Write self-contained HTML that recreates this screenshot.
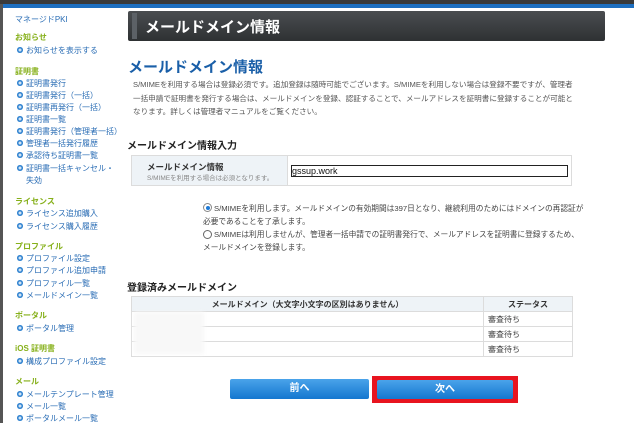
<!DOCTYPE html>
<html><head><meta charset="utf-8"><style>
*{margin:0;padding:0;box-sizing:border-box}
body{width:634px;height:423px;overflow:hidden;background:#fff;font-family:"Liberation Sans","Noto Sans CJK JP",sans-serif;position:relative}
.a{position:absolute;white-space:nowrap}
.topd{position:absolute;left:0;top:0;width:634px;height:4px;background:#3a3a3a}
.topb{position:absolute;left:0;top:4px;width:634px;height:4px;background:#1e6fc0}
.lb{position:absolute;left:0;top:4px;width:3px;height:419px;background:#555}
.sh{font-size:8px;font-weight:bold;color:#86b01a}
.si{font-size:8px;color:#2a6db5;left:26px}
.si:before{content:"";position:absolute;left:-9px;top:2px;width:6px;height:6px;border-radius:50%;background:#2f82d0;box-shadow:inset 0 0 0 1.5px #2f82d0,inset 0 0 0 3px #cfe3f5}
.title{position:absolute;left:128px;top:11px;width:477px;height:30px;background:linear-gradient(#4a4d50,#2e3133);border-radius:2px}
.title:before{content:"";position:absolute;left:4px;top:2px;width:5px;height:26px;background:#5c6166}
.p{font-size:7.6px;color:#555;left:133px}
.r{font-size:7.7px;color:#444}
td,th{border:1px solid #dcdcdc}
.btn{position:absolute;height:20px;background:linear-gradient(#4aa3ea,#1477cf);color:#fff;font-weight:bold;font-size:10px;text-align:center;line-height:20px;border-radius:2px}
</style></head><body>
<div class="topd"></div><div class="topb"></div><div class="lb"></div>
<div class="a" style="left:15px;top:14px;font-size:8px;color:#2a6db5">マネージドPKI</div>
<div class="a sh" style="left:15px;top:32px">お知らせ</div>
<div class="a si" style="top:45px">お知らせを表示する</div>
<div class="a sh" style="left:15px;top:66px">証明書</div>
<div class="a si" style="top:78px">証明書発行</div>
<div class="a si" style="top:90px">証明書発行（一括）</div>
<div class="a si" style="top:102px">証明書再発行（一括）</div>
<div class="a si" style="top:114px">証明書一覧</div>
<div class="a si" style="top:126px">証明書発行（管理者一括）</div>
<div class="a si" style="top:138px">管理者一括発行履歴</div>
<div class="a si" style="top:150px">承認待ち証明書一覧</div>
<div class="a si" style="top:163px">証明書一括キャンセル・</div>
<div class="a" style="left:26px;top:175px;font-size:8px;color:#2a6db5">失効</div>
<div class="a sh" style="left:15px;top:196px">ライセンス</div>
<div class="a si" style="top:208px">ライセンス追加購入</div>
<div class="a si" style="top:221px">ライセンス購入履歴</div>
<div class="a sh" style="left:15px;top:241px">プロファイル</div>
<div class="a si" style="top:253px">プロファイル設定</div>
<div class="a si" style="top:265px">プロファイル追加申請</div>
<div class="a si" style="top:278px">プロファイル一覧</div>
<div class="a si" style="top:290px">メールドメイン一覧</div>
<div class="a sh" style="left:15px;top:310px">ポータル</div>
<div class="a si" style="top:323px">ポータル管理</div>
<div class="a sh" style="left:15px;top:343px">iOS 証明書</div>
<div class="a si" style="top:356px">構成プロファイル設定</div>
<div class="a sh" style="left:15px;top:376px">メール</div>
<div class="a si" style="top:389px">メールテンプレート管理</div>
<div class="a si" style="top:401px">メール一覧</div>
<div class="a si" style="top:413px">ポータルメール一覧</div>

<div class="title"><div class="a" style="left:17px;top:5px;color:#fff;font-size:15px;font-weight:bold">メールドメイン情報</div></div>
<div class="a" style="left:128px;top:56px;font-size:15px;font-weight:bold;color:#1a5fa8">メールドメイン情報</div>
<div class="a p" style="top:79px">S/MIMEを利用する場合は登録必須です。追加登録は随時可能でございます。S/MIMEを利用しない場合は登録不要ですが、管理者</div>
<div class="a p" style="top:93px">一括申請で証明書を発行する場合は、メールドメインを登録、認証することで、メールアドレスを証明書に登録することが可能と</div>
<div class="a p" style="top:106px">なります。詳しくは管理者マニュアルをご覧ください。</div>
<div class="a" style="left:127px;top:137px;font-size:10px;font-weight:bold;color:#222">メールドメイン情報入力</div>
<div class="a" style="left:131px;top:155px;width:441px;height:31px;border:1px solid #dcdcdc">
 <div class="a" style="left:0;top:0;width:156px;height:29px;background:#eef3f7;border-right:1px solid #dcdcdc"></div>
 <div class="a" style="left:15px;top:5px;font-size:8.5px;font-weight:bold;color:#333">メールドメイン情報</div>
 <div class="a" style="left:15px;top:16px;font-size:6.5px;color:#888">S/MIMEを利用する場合は必須となります。</div>
 <div class="a" style="left:159px;top:9px;width:277px;height:12px;border:1px solid #222;font-size:9px;line-height:10px;color:#111">gssup.work</div>
</div>
<div class="a" style="left:203px;top:203px;width:9px;height:9px;border-radius:50%;border:1px solid #888;background:#fff"><div style="margin:1.5px;width:4px;height:4px;border-radius:50%;background:#1e7ad6"></div></div>
<div class="a r" style="left:214px;top:203px">S/MIMEを利用します。メールドメインの有効期間は397日となり、継続利用のためにはドメインの再認証が</div>
<div class="a r" style="left:203px;top:216px">必要であることを了承します。</div>
<div class="a" style="left:203px;top:230px;width:9px;height:9px;border-radius:50%;border:1px solid #666;background:#fff"></div>
<div class="a r" style="left:214px;top:229px">S/MIMEは利用しませんが、管理者一括申請での証明書発行で、メールアドレスを証明書に登録するため、</div>
<div class="a r" style="left:203px;top:242px">メールドメインを登録します。</div>
<div class="a" style="left:127px;top:279px;font-size:10px;font-weight:bold;color:#222">登録済みメールドメイン</div>
<table class="a" style="left:131px;top:296px;width:442px;border-collapse:collapse;font-size:8px;color:#444">
<tr style="height:15px;background:#eef3f7"><th style="width:352px;font-weight:bold;color:#333">メールドメイン（大文字小文字の区別はありません）</th><th style="color:#333">ステータス</th></tr>
<tr style="height:15px"><td></td><td style="padding-left:4px">審査待ち</td></tr>
<tr style="height:15px"><td></td><td style="padding-left:4px">審査待ち</td></tr>
<tr style="height:15px"><td></td><td style="padding-left:4px">審査待ち</td></tr>
</table>
<div class="a" style="left:134px;top:312px;width:70px;height:42px;background:#f8f8f8;filter:blur(2px)"></div>
<div class="btn" style="left:230px;top:379px;width:139px">前へ</div>
<div class="a" style="left:372px;top:376px;width:146px;height:27px;background:#e8141f"></div>
<div class="btn" style="left:377px;top:380px;width:136px;height:19px">次へ</div>
</body></html>
